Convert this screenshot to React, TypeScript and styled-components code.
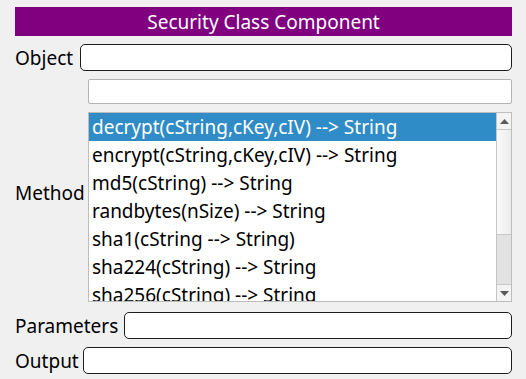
import * as React from 'react'
import styled, { createGlobalStyle } from 'styled-components'

const GlobalStyle = createGlobalStyle`
  html, body {
    margin: 0;
    padding: 0;
    background: #f0f0f0;
    font-family: 'Noto Sans', 'Open Sans', sans-serif;
  }
`

const Panel = styled.div`
  width: 526px;
  height: 379px;
  box-sizing: border-box;
  padding: 7px 14px 0 15px;
  display: flex;
  flex-direction: column;
`

const Title = styled.div`
  height: 29px;
  background: #800080;
  color: #ffffff;
  font-size: 19px;
  display: flex;
  align-items: center;
  justify-content: center;
`

const Row = styled.div<{ $top: number; $gap?: number }>`
  display: flex;
  align-items: center;
  margin-top: ${(p) => p.$top}px;
  gap: ${(p) => p.$gap ?? 7}px;
`

const Label = styled.div<{ $width?: number; $lift?: number }>`
  font-size: 19px;
  color: #000;
  white-space: nowrap;
  ${(p) => (p.$width ? `width: ${p.$width}px; flex: none;` : '')}
  margin-bottom: ${(p) => p.$lift ?? 0}px;
`

const Field = styled.div`
  flex: 1;
  height: 27px;
  box-sizing: border-box;
  background: #fff;
  border: 1px solid #1e1e1e;
  border-radius: 5px;
`

const PlainField = styled.div`
  flex: 1;
  height: 25px;
  box-sizing: border-box;
  background: #fff;
  border: 1px solid #b4b4b4;
  border-radius: 2px;
`

const List = styled.div`
  flex: 1;
  height: 190px;
  box-sizing: border-box;
  border: 1px solid #bdbdbd;
  background: #fff;
  display: flex;
  overflow: hidden;
`

const Items = styled.div`
  flex: 1;
  overflow: hidden;
`

const Item = styled.div<{ $selected?: boolean }>`
  height: 28px;
  line-height: 28px;
  padding-left: 3px;
  font-size: 19px;
  white-space: nowrap;
  color: ${(p) => (p.$selected ? '#ffffff' : '#000000')};
  background: ${(p) => (p.$selected ? '#308cc6' : 'transparent')};
`

const Scrollbar = styled.div`
  width: 14px;
  flex: none;
  border-left: 1px solid #c4c4c4;
  display: flex;
  flex-direction: column;
  background: #e2e2e2;
`

const ArrowButton = styled.div`
  height: 16px;
  flex: none;
  background: #f4f4f4;
  display: flex;
  align-items: center;
  justify-content: center;
  border-bottom: 1px solid #c8c8c8;
  &:last-child {
    border-bottom: none;
    border-top: 1px solid #c8c8c8;
    margin-top: auto;
  }
`

const Thumb = styled.div`
  height: 104px;
  flex: none;
  background: linear-gradient(to right, #fafafa, #ececec);
  border-bottom: 1px solid #c8c8c8;
`

const methods = [
  'decrypt(cString,cKey,cIV) --> String',
  'encrypt(cString,cKey,cIV) --> String',
  'md5(cString) --> String',
  'randbytes(nSize) --> String',
  'sha1(cString --> String)',
  'sha224(cString) --> String',
  'sha256(cString) --> String',
]

const Arrow = ({ up }: { up?: boolean }) => (
  <svg width="9" height="5" viewBox="0 0 9 5">
    <path d={up ? 'M0 5 L4.5 0 L9 5 Z' : 'M0 0 L4.5 5 L9 0 Z'} fill="#5a5a5a" />
  </svg>
)

const App = () => {
  return (
    <>
      <GlobalStyle />
      <Panel>
        <Title>Security Class Component</Title>
        <Row $top={8}>
          <Label>Object</Label>
          <Field />
        </Row>
        <Row $top={8} $gap={0}>
          <Label $width={73} />
          <PlainField />
        </Row>
        <Row $top={8} $gap={0}>
          <Label $width={73} $lift={28}>
            Method
          </Label>
          <List>
            <Items>
              {methods.map((m, i) => (
                <Item key={m} $selected={i === 0}>
                  {m}
                </Item>
              ))}
            </Items>
            <Scrollbar>
              <ArrowButton>
                <Arrow up />
              </ArrowButton>
              <Thumb />
              <ArrowButton>
                <Arrow />
              </ArrowButton>
            </Scrollbar>
          </List>
        </Row>
        <Row $top={10} $gap={6}>
          <Label>Parameters</Label>
          <Field />
        </Row>
        <Row $top={8} $gap={4}>
          <Label>Output</Label>
          <Field />
        </Row>
      </Panel>
    </>
  )
}

export default App
